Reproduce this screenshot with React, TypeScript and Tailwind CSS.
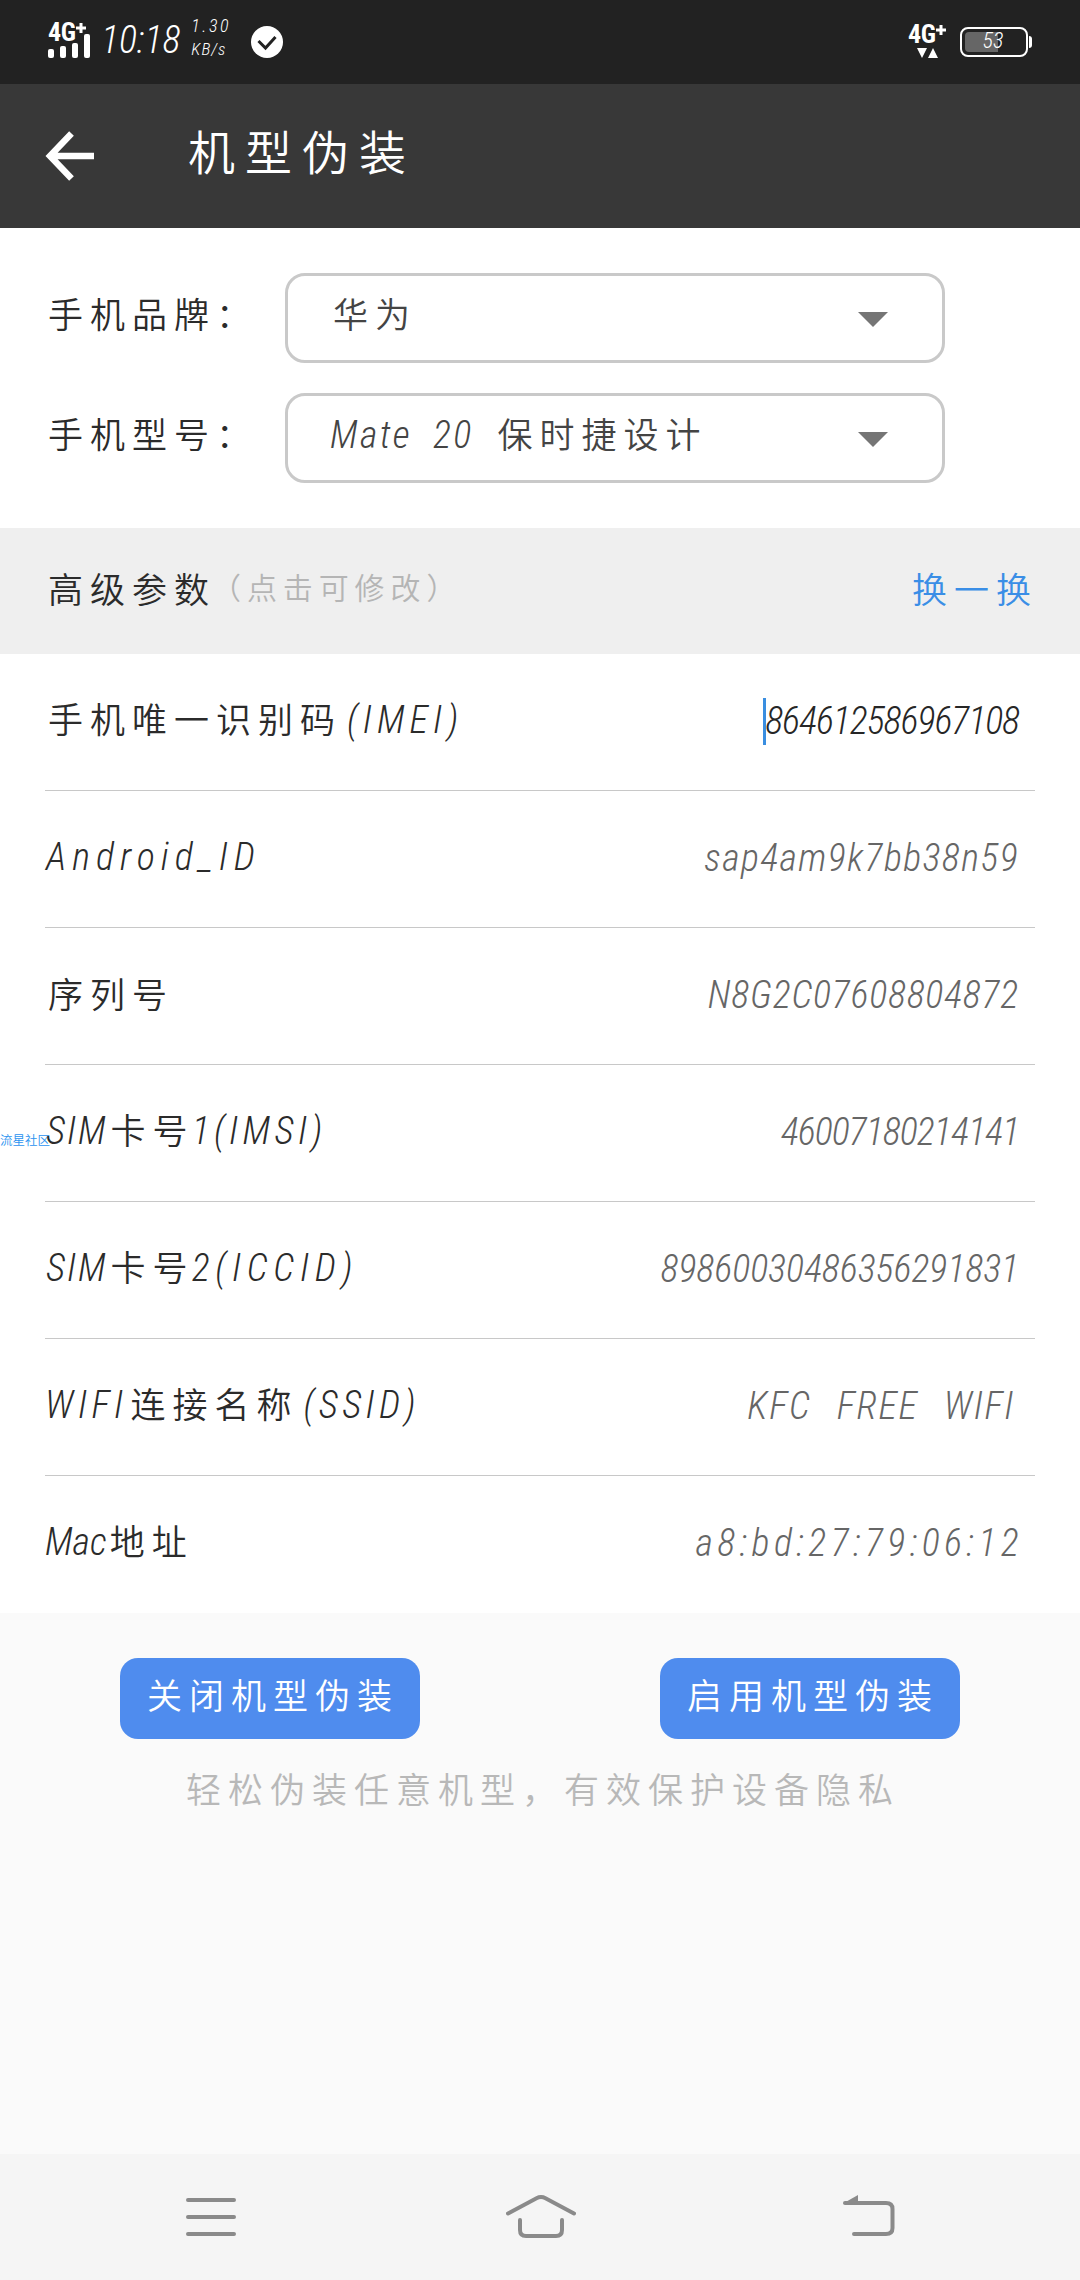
import type { ReactNode } from "react";

/* ── Text runs ───────────────────────────────────────────── */
function Zh({ children }: { children: ReactNode }) {
  return <span className="-mr-[3px] ml-[3px] text-[35px] tracking-[7px]">{children}</span>;
}

function En({ className = "", children }: { className?: string; children: ReactNode }) {
  return (
    <span className={`whitespace-pre font-['Roboto_Condensed','Roboto','Noto_Sans_CJK_SC',sans-serif] text-[38px] italic ${className}`}>
      {children}
    </span>
  );
}

/* ── Status bar ──────────────────────────────────────────── */
function SignalBars() {
  return (
    <svg className="-mt-[7px] block" width="42" height="24" viewBox="0 0 42 24" fill="#fff">
      <rect x="0" y="15" width="6" height="9" rx="2" />
      <rect x="12" y="12" width="6" height="12" rx="2" />
      <rect x="24" y="9" width="6" height="15" rx="2" />
      <rect x="36" y="0" width="6" height="24" rx="2" />
    </svg>
  );
}

function NetworkType() {
  return (
    <div className="flex h-[18px] items-start font-['Roboto_Condensed','Roboto',sans-serif] text-[26px] leading-[18px] font-bold">
      <span className="tracking-[-0.5px]">4G</span>
      <svg className="ml-px" width="10" height="10" viewBox="0 0 10 10" fill="#fff">
        <path d="M3.5 0h3v3.5H10v3H6.5V10h-3V6.5H0v-3h3.5z" />
      </svg>
    </div>
  );
}

function StatusBar() {
  return (
    <div className="flex h-[84px] items-start bg-[#222] text-white">
      <div className="mt-[23px] ml-12 w-[53px]">
        <NetworkType />
        <SignalBars />
      </div>
      <En className="mt-[20px] leading-10">10:18</En>
      <div className="mt-[16px] ml-[11px] flex w-[48px] flex-col">
        <En className="text-[18px]! leading-5 tracking-[2.5px]">1.30</En>
        <En className="text-[17px]! leading-[26px] tracking-[1px]">KB/s</En>
      </div>
      <svg className="mt-[26px] ml-auto mr-[625px] shrink-0" width="32" height="32" viewBox="0 0 32 32">
        <circle cx="16" cy="16" r="16" fill="#fff" />
        <path d="M7.5 15l7 7L24.5 11" fill="none" stroke="#222" strokeWidth="3" />
      </svg>
      <div className="mt-[25px] w-[52px]">
        <NetworkType />
        <svg className="mt-[5px] ml-[9px]" width="22" height="10" viewBox="0 0 22 10" fill="#fff">
          <path d="M0 0h10L5 10zM11 10h10L16 0z" />
        </svg>
      </div>
      <div className="mt-[27px] mr-12 flex shrink-0 items-center gap-px">
        <div className="grid h-[30px] w-[68px] rounded-lg border-2 border-white p-[3px]">
          <div className="col-start-1 row-start-1 w-[33px] rounded-l-[4px] bg-[#666]" />
          <En className="col-start-1 row-start-1 pr-[2px] text-center text-[22px]! leading-[17px]">53</En>
        </div>
        <div className="h-3 w-[3px] rounded-r-full bg-white" />
      </div>
    </div>
  );
}

/* ── App bar ─────────────────────────────────────────────── */
function AppBar() {
  return (
    <div className="flex h-36 items-center bg-[#383838] pl-[45px] text-white">
      <svg className="block" width="49" height="50" viewBox="0 0 49 50" fill="none" stroke="#fff" strokeWidth="6.5">
        <path d="M26.5 2.5L5 25l21.5 22.5M5 25h44" />
      </svg>
      <h1 className="ml-[94px] pb-[12px] text-[47px] tracking-[10px]">机型伪装</h1>
    </div>
  );
}

/* ── Brand / model pickers ───────────────────────────────── */
function Picker({ label, children }: { label: string; children: ReactNode }) {
  return (
    <div className="flex h-[90px] items-center">
      <div className="w-[240px] pb-[2px] leading-10 whitespace-nowrap text-[#2b2b2b]"><Zh>{label}</Zh></div>
      <div className="flex h-[90px] w-[660px] items-center justify-between rounded-[20px] border-[3px] border-[#c9c9c9] pr-[54px] pl-[42px] text-[#444]">
        <div className="pb-[2px] leading-10 whitespace-nowrap">{children}</div>
        <svg width="30" height="15" viewBox="0 0 30 15" fill="#757575" className="mt-[3px]">
          <path d="M0 0h30L15 15z" />
        </svg>
      </div>
    </div>
  );
}

/* ── Parameter rows ──────────────────────────────────────── */
interface Param {
  label: ReactNode;
  value: string;
  tracking: string;
  focused?: boolean;
}

const params: Param[] = [
  {
    label: <><Zh>手机唯一识别码</Zh><En className="ml-2 tracking-[5.1px]">(IMEI)</En></>,
    value: "864612586967108",
    tracking: "tracking-[-1px]",
    focused: true,
  },
  { label: <En className="ml-px tracking-[6px]">Android_ID</En>, value: "sap4am9k7bb38n59", tracking: "tracking-[1.4px]" },
  { label: <Zh>序列号</Zh>, value: "N8G2C07608804872", tracking: "tracking-[0.8px]" },
  {
    label: <><En className="ml-px tracking-[2px]">SIM</En><Zh>卡号</Zh><En className="tracking-[4.4px]">1(IMSI)</En></>,
    value: "46007180214141",
    tracking: "tracking-[-0.9px]",
  },
  {
    label: <><En className="ml-px tracking-[2px]">SIM</En><Zh>卡号</Zh><En className="tracking-[5.8px]">2(ICCID)</En></>,
    value: "89860030486356291831",
    tracking: "tracking-normal",
  },
  {
    label: <><En className="tracking-[4.5px]">WIFI</En><Zh>连接名称</Zh><En className="ml-2 tracking-[4.4px]">(SSID)</En></>,
    value: "KFC FREE WIFI",
    tracking: "pr-[4px] tracking-[1.7px] [word-spacing:15px]",
  },
  { label: <><En>Mac</En><Zh>地址</Zh></>, value: "a8:bd:27:79:06:12", tracking: "-mr-1 tracking-[4.4px]" },
];

function ParamRow({ label, value, tracking, focused }: Param) {
  return (
    <div className="flex h-[137px] items-center justify-between border-b border-[#c8c8c8] pr-4 pb-[2px] whitespace-nowrap last:border-transparent">
      <div className="pb-[4px] text-[35px] leading-[48px] text-[#2b2b2b]">{label}</div>
      <div className={focused ? "flex items-center text-[#262626]" : "flex items-center text-[#666]"}>
        {focused && <div className="-mr-px h-[47px] w-[3px] bg-[#3a8ee0]" />}
        <En className={tracking}>{value}</En>
      </div>
    </div>
  );
}

function ActionButton({ children }: { children: ReactNode }) {
  return (
    <button className="h-[81px] w-[300px] rounded-[18px] bg-[#4f8cee] pb-[9px] whitespace-nowrap text-white">
      <Zh>{children}</Zh>
    </button>
  );
}

/* ── System navigation ───────────────────────────────────── */
function NavBar() {
  return (
    <div className="flex h-[126px] items-start justify-between bg-[#f5f5f5] pt-[41px] pr-[185px] pl-[186px]">
      <svg width="50" height="44" viewBox="0 0 50 44" fill="none" stroke="#8a8a8a" strokeWidth="4" strokeLinecap="round">
        <path d="M2 5h46M2 22h46M2 39h46" />
      </svg>
      <svg className="ml-[2px]" width="70" height="44" viewBox="0 0 70 44" fill="none" stroke="#8a8a8a" strokeWidth="4" strokeLinecap="round">
        <path d="M2 18.5L30.5 3.2Q35 1 39.5 3.2L68 18.5" />
        <path d="M14 25v10q0 6 6 6h30q6 0 6-6V25" />
      </svg>
      <svg width="52" height="44" viewBox="0 0 52 44" fill="none" stroke="#8a8a8a" strokeWidth="4" strokeLinecap="round">
        <path d="M2 8h41q6.5 0 6.5 6v19q0 6-6.5 6H11" />
        <path d="M0 8.5L15 0v9z" fill="#8a8a8a" stroke="none" />
      </svg>
    </div>
  );
}

/* ── Main component ──────────────────────────────────────── */
export default function App() {
  return (
    <div className="relative flex h-[2280px] w-[1080px] flex-col overflow-hidden bg-[#fafafa] font-['Noto_Sans_CJK_SC',sans-serif] font-[350]">
      <StatusBar />
      <AppBar />

      <div className="flex h-[300px] flex-col gap-[30px] bg-white pt-[45px] pl-[45px]">
        <Picker label="手机品牌："><Zh>华为</Zh></Picker>
        <Picker label="手机型号：">
          <En className="tracking-[2.4px] [word-spacing:10px]">{"Mate 20 "}</En>
          <Zh>保时捷设计</Zh>
        </Picker>
      </div>

      <div className="flex h-[126px] items-center justify-between bg-[#efefef] px-[45px] pb-[6px] whitespace-nowrap">
        <div className="flex items-center text-[#2b2b2b]">
          <Zh>高级参数</Zh>
          <span className="-ml-[2px] pb-[3px] text-[30px] tracking-[5.9px] text-[#b5b5b5]">（点击可修改）</span>
        </div>
        <div className="text-[#3a8ee6]"><Zh>换一换</Zh></div>
      </div>

      <div className="bg-white px-[45px]">
        {params.map((p) => <ParamRow key={p.value} {...p} />)}
      </div>

      <div className="flex justify-between px-[120px] pt-[45px]">
        <ActionButton>关闭机型伪装</ActionButton>
        <ActionButton>启用机型伪装</ActionButton>
      </div>
      <p className="mt-[23px] text-center whitespace-nowrap text-[#b8b8b8]"><Zh>轻松伪装任意机型，有效保护设备隐私</Zh></p>

      <div className="mt-auto"><NavBar /></div>

      {/* floating watermark */}
      <span className="absolute top-[1130px] left-[0px] text-[12.5px] leading-5 text-[#2b93f0]">流星社区</span>
    </div>
  );
}
